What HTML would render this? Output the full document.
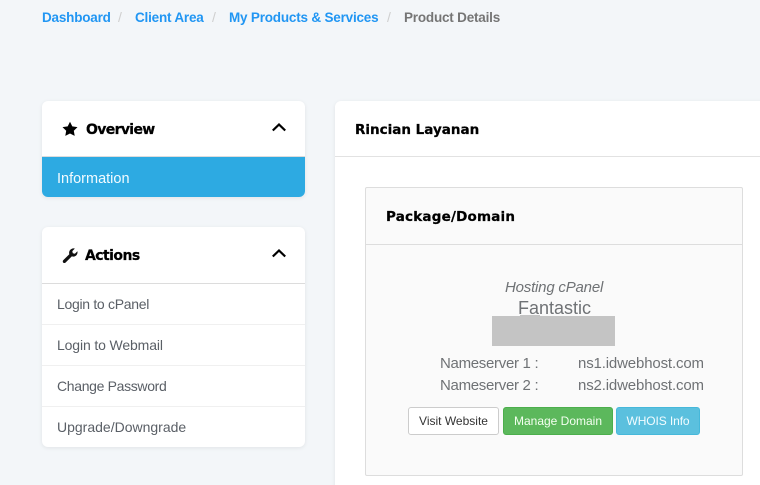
<!DOCTYPE html>
<html><head><meta charset="utf-8">
<style>
html,body{margin:0;padding:0;width:760px;height:485px;overflow:hidden}
body{background:#f3f6f9;font-family:"Liberation Sans",sans-serif}
#w{position:absolute;left:0;top:0;width:760px;height:485px;overflow:hidden}
.a{position:absolute;white-space:nowrap}
.card{position:absolute;background:#fff;border-radius:6px;box-shadow:0 1px 4px rgba(0,0,0,.08)}
.bc{top:9px;font-size:13.5px;line-height:17px;font-weight:bold;color:#2196f3;letter-spacing:-.2px}
.sl{top:9px;font-size:14px;line-height:17px;color:#cfcfcf}
.h{font-weight:bold;color:#000;line-height:20px;font-family:"DejaVu Sans",sans-serif;-webkit-text-stroke:.25px #000}
.li{left:57px;font-size:14px;line-height:18px;color:#5a5f66}
.line{position:absolute;height:1px}
.t{font-size:15px;line-height:18px;color:#6f7275}
.btn{position:absolute;top:407px;height:28px;line-height:27px;box-sizing:border-box;border-radius:3px;text-align:center;font-size:12px;border:1px solid}
</style></head><body><div id="w">
<div class="a bc" style="left:42px">Dashboard</div><div class="a sl" style="left:118px">/</div>
<div class="a bc" style="left:135px">Client Area</div><div class="a sl" style="left:212px">/</div>
<div class="a bc" style="left:229px">My Products &amp; Services</div><div class="a sl" style="left:387px">/</div>
<div class="a bc" style="left:404px;color:#757575">Product Details</div>

<div class="card" style="left:42px;top:101px;width:263px;height:96px;overflow:hidden">
<div class="line" style="left:0;top:55px;width:263px;background:#dcdcdc"></div>
<div style="position:absolute;left:0;top:56px;width:263px;height:40px;background:#2daae2"></div>
</div>
<svg class="a" style="left:62px;top:121px" width="16" height="16" viewBox="0 0 16 16"><path d="M8 .8l2.300 4.600 5.200.7-3.700 3.600.9 5.200L8 12.500l-4.700 2.400.9-5.200L.5 6.100l5.200-.7z" fill="#000"/></svg>
<div class="a h" style="left:86px;top:120px;font-size:14px;letter-spacing:-.65px">Overview</div>
<svg class="a" style="left:271px;top:121px" width="16" height="12" viewBox="0 0 16 12"><path d="M1.800 9.500L8 3.500l6.200 6" fill="none" stroke="#000" stroke-width="2.200"/></svg>
<div class="a" style="left:57px;top:170px;font-size:14.5px;line-height:18px;color:#f2fbff">Information</div>

<div class="card" style="left:42px;top:227px;width:263px;height:220px;overflow:hidden">
<div class="line" style="left:0;top:56px;width:263px;background:#dcdcdc"></div>
<div class="line" style="left:0;top:97px;width:263px;background:#f0f0f0"></div>
<div class="line" style="left:0;top:138px;width:263px;background:#f0f0f0"></div>
<div class="line" style="left:0;top:179px;width:263px;background:#f0f0f0"></div>
</div>
<svg class="a" style="left:62px;top:247px" width="16" height="16" viewBox="0 0 16 16"><path d="M1.200 13.300L7.300 7.200C6.700 5.100 7.400 3.200 9 2.200c1.200-.8 2.500-1 3.800-.6L10.300 4.100l.5 2.100 2.100.5 2.500-2.500c.3 1.500 0 2.900-1 4-1.200 1.300-2.900 1.700-4.600 1.200L3.500 15.600c-.6.600-1.500.6-2.100.1-.8-.6-.8-1.700-.2-2.400z" fill="#111"/></svg>
<div class="a h" style="left:85px;top:246px;font-size:14px;letter-spacing:-.55px">Actions</div>
<svg class="a" style="left:271px;top:247px" width="16" height="12" viewBox="0 0 16 12"><path d="M1.800 9.500L8 3.500l6.200 6" fill="none" stroke="#000" stroke-width="2.200"/></svg>
<div class="a li" style="top:295px;letter-spacing:-.3px">Login to cPanel</div>
<div class="a li" style="top:336px;letter-spacing:-.13px">Login to Webmail</div>
<div class="a li" style="top:377px;letter-spacing:-.33px">Change Password</div>
<div class="a li" style="top:418px">Upgrade/Downgrade</div>

<div class="card" style="left:335px;top:101px;width:440px;height:400px">
<div class="line" style="left:0;top:55px;width:440px;background:#e2e2e2"></div>
</div>
<div class="a h" style="left:355px;top:120px;font-size:13.5px">Rincian Layanan</div>

<div style="position:absolute;left:365px;top:187px;width:378px;height:289px;box-sizing:border-box;background:#fafafa;border:1px solid #dddddd;border-radius:2px">
<div class="line" style="left:0;top:56px;width:376px;background:#dddddd"></div>
</div>
<div class="a h" style="left:386px;top:207px;font-size:13.5px;letter-spacing:.2px">Package/Domain</div>
<div class="a t" style="left:505px;top:279px;font-style:italic;letter-spacing:-.2px">Hosting cPanel</div>
<div class="a" style="left:518px;top:298px;font-size:18px;line-height:20px;color:#6f7275">Fantastic</div>
<div class="a" style="left:492px;top:316px;width:123px;height:30px;background:#c4c4c4"></div>
<div class="a" style="left:520px;top:315px;width:20px;height:1px;background:#c4c4c4"></div>
<div class="a t" style="left:440px;top:355px;letter-spacing:-.3px">Nameserver 1 :</div>
<div class="a t" style="left:578px;top:355px;letter-spacing:-.15px">ns1.idwebhost.com</div>
<div class="a t" style="left:440px;top:377px;letter-spacing:-.3px">Nameserver 2 :</div>
<div class="a t" style="left:578px;top:377px;letter-spacing:-.15px">ns2.idwebhost.com</div>
<div class="btn" style="left:408px;width:91px;background:#fff;border-color:#ccc;color:#333">Visit Website</div>
<div class="btn" style="left:503px;width:110px;background:#5cb85c;border-color:#4cae4c;color:#f4fff0">Manage Domain</div>
<div class="btn" style="left:616px;width:84px;background:#5bc0de;border-color:#46b8da;color:#f2fcff;letter-spacing:-.1px">WHOIS Info</div>
</div></body></html>
